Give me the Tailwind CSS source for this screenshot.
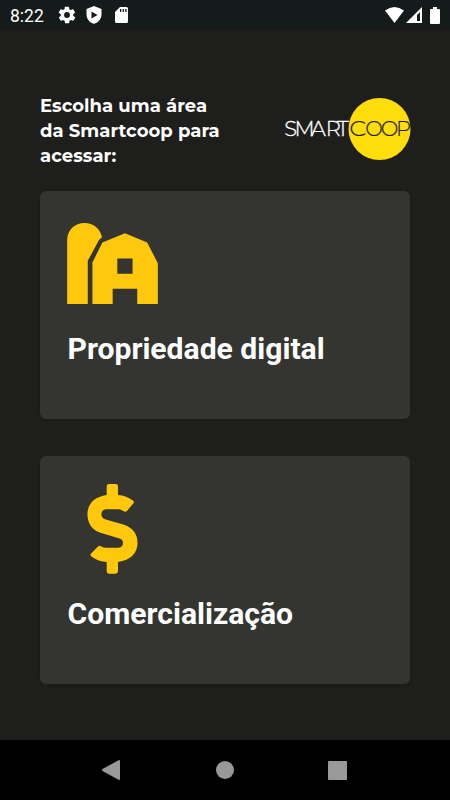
<!DOCTYPE html>
<html lang="pt-BR">
<head>
  <meta charset="UTF-8">
  <meta name="viewport" content="width=device-width, initial-scale=1.0">
  <title>Smartcoop</title>
  <script src="https://cdn.jsdelivr.net/npm/@tailwindcss/browser@4"></script>
</head>
<body class="bg-[#1e1e1c] h-[800px] flex flex-col overflow-hidden font-['Roboto',sans-serif] text-white">
  <!-- Status bar -->
  <div class="h-[30px] shrink-0 bg-[#151a1b] flex items-center justify-between pl-[10px] pr-[10px]">
    <div class="flex items-center">
      <span class="w-[47px] text-[17.5px] leading-[30px] pt-[2px]">8:22</span>
      <svg class="w-[20px] h-[20px]" viewBox="0 0 24 24" fill="#fff"><path d="M19.4 13c0-.3.1-.6.1-1s0-.7-.1-1l2.1-1.6c.2-.2.2-.4.1-.6l-2-3.500c-.1-.2-.4-.3-.6-.2l-2.500 1c-.5-.4-1.100-.7-1.700-1l-.4-2.600c0-.3-.2-.5-.5-.5h-4c-.2 0-.4.2-.5.500l-.4 2.600c-.6.2-1.200.6-1.700 1l-2.500-1c-.2-.1-.5 0-.6.200l-2 3.500c-.1.2-.1.500.1.600L4.600 11a8 8 0 0 0 0 2l-2.100 1.600c-.2.2-.2.400-.1.600l2 3.500c.1.200.4.300.6.200l2.500-1c.5.400 1.100.700 1.700 1l.4 2.600c0 .3.2.5.5.5h4c.2 0 .5-.2.5-.5l.4-2.600c.6-.2 1.200-.6 1.700-1l2.500 1c.2.1.5 0 .6-.2l2-3.500c.1-.2.1-.5-.1-.6zM12 15.500a3.500 3.500 0 1 1 0-7 3.500 3.500 0 0 1 0 7z"/></svg>
      <svg class="ml-[9px] w-[16px] h-[18px]" viewBox="0 0 16 18" fill="#fff"><path fill-rule="evenodd" d="M8 0l7.500 3v5.500c0 4.300-3 8-7.500 9.300C3.500 16.500.5 12.800.5 8.500V3zM5.500 5.500v7l6-3.500z"/></svg>
      <svg class="ml-[13px] w-[13px] h-[16px]" viewBox="0 0 13 16" fill="#fff"><path fill-rule="evenodd" d="M5 0h6.500Q13 0 13 1.500v13q0 1.500-1.500 1.500h-10Q0 16 0 14.500V5zM5 2v3h1.300v-3zM7.600 2v3h1.300v-3zM10.200 2v3h1.300v-3z"/></svg>
    </div>
    <div class="flex items-center">
      <svg class="w-[19px] h-[16px]" viewBox="0 0 19 16" fill="#fff"><path d="M0 3.500Q9.500-3.500 19 3.500L9.500 16z"/></svg>
      <svg class="ml-[2px] w-[16px] h-[16px]" viewBox="0 0 16 16" fill="#fff"><path fill-rule="evenodd" d="M0 16L16 0v16zM11 8v6h3V5z"/></svg>
      <svg class="ml-[8px] w-[10px] h-[17px]" viewBox="0 0 10 17" fill="#fff"><path d="M3 0h4v2h2q1 0 1 1v13q0 1-1 1H1q-1 0-1-1V3q0-1 1-1h2z"/></svg>
    </div>
  </div>

  <main class="flex-1 px-[40px] pt-[61px]">
    <!-- Header -->
    <div class="flex items-start justify-between h-[100px]">
      <h1 class="w-[190px] pt-[3px] font-['Montserrat',sans-serif] font-bold text-[18px] leading-[25px] tracking-[0.05px] whitespace-nowrap">
        Escolha uma área<br>
        da Smartcoop para<br>
        acessar:
      </h1>
      <svg class="mt-[6px] w-[126px] h-[64px] overflow-visible font-['Montserrat',sans-serif]" viewBox="284 97 126 64" font-size="21" font-weight="300">
        <circle cx="379.500" cy="129" r="31" fill="#ffdd0a"/>
        <text y="136" x="284.300 294.600 311 325.800 337" fill="#fff" stroke="#fff" stroke-width="0.3">SMART</text>
        <g fill="#1e1e1c" stroke="#1e1e1c" stroke-width="0.2">
          <text x="349.200" y="136" textLength="17" lengthAdjust="spacingAndGlyphs">C</text>
          <text y="136" x="365.300 380.700 396">OOP</text>
        </g>
      </svg>
    </div>

    <!-- Areas -->
    <div class="flex flex-col gap-[37px]">
      <a class="block h-[228px] rounded-[6px] bg-[#343530] pl-[27px] pt-[32px] shadow-sm">
        <svg class="w-[91px] h-[81px]" viewBox="111 129 273 244" fill="#ffc80c">
          <path d="M111 373V180C111 151 134 129 163 129C190 129 211 147 216 172Q210 176 206 182L173 243V373z"/>
          <path fill-rule="evenodd" d="M187 373V248L217 188L285 160L352 188L384 250V373H322V327H248V373zM262 236V282H308V236z"/>
        </svg>
        <h2 class="mt-[24px] pl-[0.5px] text-[30.1px] leading-[41px] font-bold whitespace-nowrap">Propriedade digital</h2>
      </a>
      <a class="block h-[228px] rounded-[6px] bg-[#343530] pl-[27px] pt-[28px] shadow-sm">
        <svg class="ml-[20px] w-[51px] h-[90px]" viewBox="82 41 153 271" fill="#ffc80c">
          <path d="M141 48Q141 41 148 41H168Q175 41 175 48V74Q201 76 220 91Q225 95 221 100L202 122Q197 127 191 122Q185 117 177 117H139Q125 118 125 132Q125 143 136 147L191 163Q234 177 234 220Q232 266 175 276V304Q175 311 168 311H148Q141 311 141 304V276Q116 274 95 259Q90 255 94 250L115 229Q119 225 125 229Q131 233 139 233H177Q190 232 190 218Q190 208 180 205L122 188Q83 173 83 131Q85 83 141 74z"/>
        </svg>
        <h2 class="mt-[19px] pl-[0.5px] text-[30.1px] leading-[41px] font-bold whitespace-nowrap">Comercialização</h2>
      </a>
    </div>
  </main>

  <!-- Navigation bar -->
  <nav class="h-[60px] shrink-0 bg-black flex items-center justify-between pl-[102px] pr-[103px]">
    <svg class="w-[18px] h-[20px]" viewBox="0 0 18 20" fill="#999"><path d="M17 0Q18 0 18 1V19Q18 20 17 20L.5 11Q-.3 10 .5 9z"/></svg>
    <div class="ml-[1px] size-[18px] rounded-full bg-[#999]"></div>
    <div class="size-[19px] rounded-[1px] bg-[#999]"></div>
  </nav>
</body>
</html>
